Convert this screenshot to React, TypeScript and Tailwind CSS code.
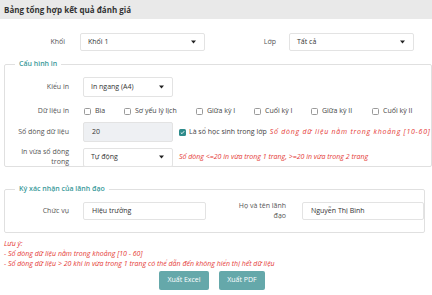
import React from "react";

const font = { fontFamily: '"Open Sans", "Noto Sans", sans-serif' };

function Caret() {
  return (
    <svg width="5" height="4" viewBox="0 0 5 4" className="shrink-0">
      <path d="M0 0.5 L5 0.5 L2.5 3.5 Z" fill="#222" />
    </svg>
  );
}

function Select({ value, w, h = "h-[19px]" }: { value: string; w: string; h?: string }) {
  return (
    <div className={`${w} ${h} flex items-center justify-between border border-[#e3e3e3] rounded-[2px] bg-white pl-[7px] pr-[8px] text-[7px] text-[#333]`}>
      <span>{value}</span>
      <Caret />
    </div>
  );
}

function Box({ checked }: { checked?: boolean }) {
  if (checked)
    return (
      <span className="w-[7px] h-[7px] rounded-[1.5px] bg-[#2e8b8b] flex items-center justify-center shrink-0">
        <svg width="5" height="5" viewBox="0 0 5 5">
          <path d="M0.8 2.6 L2 3.7 L4.2 1.2" stroke="white" strokeWidth="0.9" fill="none" />
        </svg>
      </span>
    );
  return <span className="w-[7px] h-[7px] rounded-[1.5px] border border-[#9a9a9a] bg-white shrink-0" />;
}

function Check({ label, w }: { label: string; w: string }) {
  return (
    <div className={`${w} flex items-center gap-[4px] text-[7px] text-[#444] whitespace-nowrap`}>
      <Box />
      <span>{label}</span>
    </div>
  );
}

export default function App() {
  return (
    <div className="w-[432px] h-[295px] bg-white relative overflow-hidden" style={font}>
      <div className="h-[19px] bg-[#e9e9e9] flex items-center pl-[4px] text-[8px] font-bold text-[#333]">
        Bảng tổng hợp kết quả đánh giá
      </div>

      <div className="flex items-center mt-[14px] h-[18px]">
        <div className="w-[66px] text-right text-[7px] text-[#555] pr-[1px]">Khối</div>
        <div className="ml-[14px]">
          <Select value="Khối 1" w="w-[125px]" h="h-[18px]" />
        </div>
        <div className="w-[84px] text-right text-[7px] text-[#555] pr-[13px]">Lớp</div>
        <Select value="Tất cả" w="w-[125px]" h="h-[18px]" />
      </div>

      <fieldset className="ml-[4px] w-[417px] h-[107px] mt-[9px] border border-[#e0e0e0] rounded-[2px] px-0 pb-0 pt-[1px] relative">
        <legend className="ml-[10px] px-[4px] text-[7px] font-semibold text-[#3a9a9a] leading-[8px]">Cấu hình in</legend>

        <div className="flex items-center mt-[8px]">
          <div className="w-[64px] text-right text-[7px] text-[#555]">Kiểu in</div>
          <div className="ml-[14px]">
            <Select value="In ngang (A4)" w="w-[90px]" h="h-[20px]" />
          </div>
        </div>

        <div className="flex items-center mt-[8px] h-[12px]">
          <div className="w-[64px] text-right text-[7px] text-[#555]">Dữ liệu in</div>
          <div className="ml-[15px] flex items-center">
            <Check label="Bìa" w="w-[40px]" />
            <Check label="Sơ yếu lý lịch" w="w-[72px]" />
            <Check label="Giữa kỳ I" w="w-[58px]" />
            <Check label="Cuối kỳ I" w="w-[57px]" />
            <Check label="Giữa kỳ II" w="w-[61px]" />
            <Check label="Cuối kỳ II" w="w-[50px]" />
          </div>
        </div>

        <div className="flex items-center mt-[5px]">
          <div className="w-[64px] shrink-0 text-right text-[7px] text-[#555]">Số dòng dữ liệu</div>
          <div className="ml-[14px] shrink-0 w-[90px] h-[20px] bg-[#eef0f3] border border-[#e3e3e3] rounded-[2px] flex items-center pl-[8px] text-[7px] text-[#333]">
            20
          </div>
          <div className="ml-[6px] flex items-center gap-[3px] text-[7px] text-[#444] whitespace-nowrap">
            <Box checked />
            <span>Là sổ học sinh trong lớp</span>
            <span className="italic text-[#e53935] tracking-[0.75px]">Số dòng dữ liệu nằm trong khoảng [10-60]</span>
          </div>
        </div>

        <div className="flex items-center mt-[5px]">
          <div className="w-[64px] shrink-0 text-right text-[7px] leading-[10px] text-[#555]">
            In vừa số dòng
            <br />
            trong
          </div>
          <div className="ml-[14px] shrink-0">
            <Select value="Tự động" w="w-[90px]" h="h-[19px]" />
          </div>
          <div className="ml-[6px] italic text-[7px] text-[#e53935] whitespace-nowrap">
            Số dòng &lt;=20 in vừa trong 1 trang, &gt;=20 in vừa trong 2 trang
          </div>
        </div>
      </fieldset>

      <fieldset className="ml-[4px] w-[417px] h-[48px] mt-[18px] border border-[#e0e0e0] rounded-[2px] px-0 pb-0 pt-[1px]">
        <legend className="ml-[10px] px-[4px] text-[7px] font-semibold text-[#3a9a9a] leading-[8px]">Ký xác nhận của lãnh đạo</legend>
        <div className="flex items-center mt-[7px]">
          <div className="w-[64px] text-right text-[7px] text-[#555]">Chức vụ</div>
          <div className="ml-[14px] w-[123px] h-[18px] border border-[#e3e3e3] rounded-[2px] flex items-center pl-[8px] text-[7px] text-[#333]">
            Hiệu trưởng
          </div>
          <div className="w-[80px] text-right text-[7px] leading-[10px] text-[#555]">
            Họ và tên lãnh
            <br />
            đạo
          </div>
          <div className="ml-[16px] w-[122px] h-[18px] border border-[#e3e3e3] rounded-[2px] flex items-center pl-[8px] text-[7px] text-[#333]">
            Nguyễn Thị Bình
          </div>
        </div>
      </fieldset>

      <div className="mt-[6px] pl-[4px] italic text-[7px] leading-[10px] text-[#e53935]">
        <div>Lưu ý:</div>
        <div>- Số dòng dữ liệu nằm trong khoảng [10 - 60]</div>
        <div>- Số dòng dữ liệu &gt; 20 khi in vừa trong 1 trang có thể dẫn đến không hiển thị hết dữ liệu</div>
      </div>

      <div className="flex justify-center gap-[10px] mt-[2px] pr-[8px]">
        <div className="w-[50px] h-[19px] bg-[#65a8aa] rounded-[2px] flex items-center justify-center text-[7px] text-white">Xuất Excel</div>
        <div className="w-[46px] h-[19px] bg-[#65a8aa] rounded-[2px] flex items-center justify-center text-[7px] text-white">Xuất PDF</div>
      </div>
    </div>
  );
}
